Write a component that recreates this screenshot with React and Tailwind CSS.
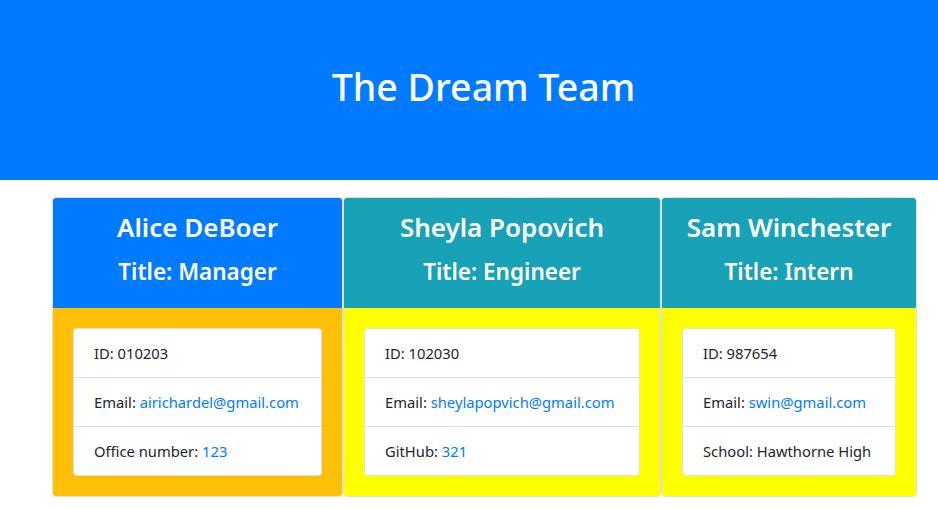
const team = [
  {
    name: 'Alice DeBoer',
    title: 'Manager',
    head: 'bg-[#007bff]',
    body: 'bg-[#ffc107]',
    width: 'w-[291px]',
    id: '010203',
    email: 'airichardel@gmail.com',
    extraLabel: 'Office number',
    extra: '123',
    extraLink: true,
  },
  {
    name: 'Sheyla Popovich',
    title: 'Engineer',
    head: 'bg-[#17a2b8]',
    body: 'bg-[#ffff00]',
    width: 'w-[318px]',
    id: '102030',
    email: 'sheylapopvich@gmail.com',
    extraLabel: 'GitHub',
    extra: '321',
    extraLink: true,
  },
  {
    name: 'Sam Winchester',
    title: 'Intern',
    head: 'bg-[#17a2b8]',
    body: 'bg-[#ffff00]',
    width: 'w-[256px]',
    id: '987654',
    email: 'swin@gmail.com',
    extraLabel: 'School',
    extra: 'Hawthorne High',
    extraLink: false,
  },
]

const EmployeeCard = ({ member }) => (
  <div className={`${member.width} flex shrink-0 flex-col overflow-hidden rounded-[4px] border border-[#dfdfdf]`}>
    <div className={`${member.head} flex h-[110px] flex-col items-center pt-[10px] text-white`}>
      <h2 className="text-[26px] font-semibold leading-[38px]">{member.name}</h2>
      <h3 className="mt-[11px] text-[22.5px] font-semibold leading-[29px]">Title: {member.title}</h3>
    </div>
    <div className={`${member.body} flex-1 p-5`}>
      <ul className="whitespace-nowrap rounded-[4px] border border-[#dfdfdf] bg-white text-[14.75px] leading-6 text-[#212529]">
        <li className="border-b border-[#dfdfdf] px-5 py-3">ID: {member.id}</li>
        <li className="border-b border-[#dfdfdf] px-5 py-3">
          Email: <a className="text-[#007bff]">{member.email}</a>
        </li>
        <li className="px-5 py-3">
          {member.extraLabel}:{' '}
          {member.extraLink ? <a className="text-[#007bff]">{member.extra}</a> : member.extra}
        </li>
      </ul>
    </div>
  </div>
)

export default function App() {
  return (
    <div className="min-h-[508px] bg-white font-['Noto_Sans',sans-serif]">
      <header className="flex h-[180px] items-center justify-center bg-[#007bff] pb-[6px] pl-[29px]">
        <h1 className="text-[37.5px] font-medium leading-[48px] text-white">The Dream Team</h1>
      </header>
      <main className="flex pl-[52px] pt-[17px]">
        {team.map((member) => (
          <EmployeeCard key={member.name} member={member} />
        ))}
      </main>
    </div>
  )
}
